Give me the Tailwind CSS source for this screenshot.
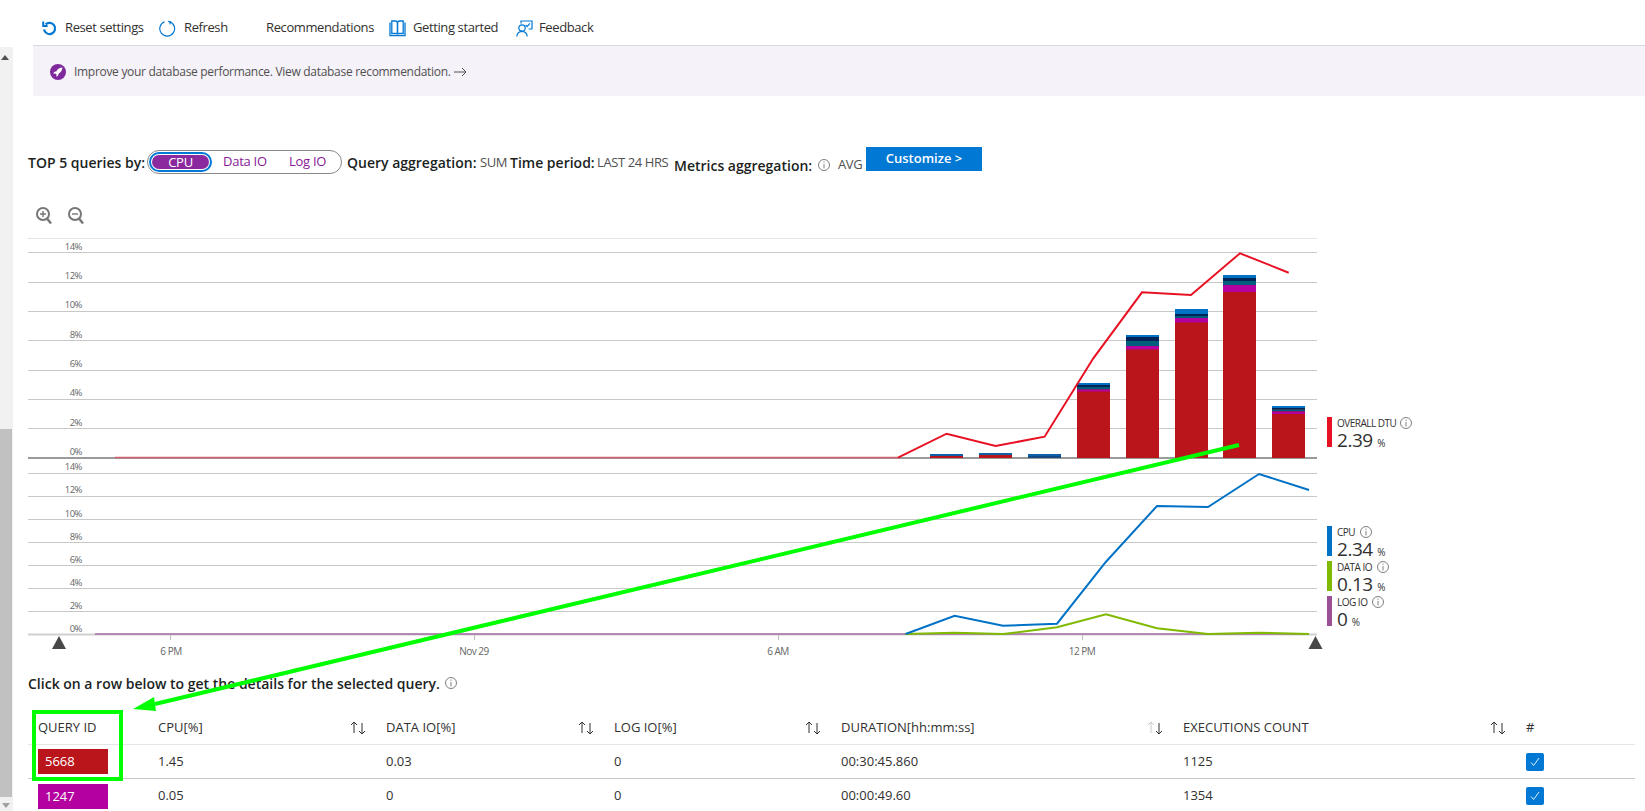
<!DOCTYPE html>
<html lang="en">
<head>
  <meta charset="UTF-8" />
  <title>Query Performance Insight</title>
  <script src="https://cdn.jsdelivr.net/npm/@tailwindcss/browser@4"></script>
</head>
<body class="relative w-[1645px] h-[811px] overflow-hidden bg-white flex font-['Open_Sans',sans-serif] text-[#323130]">

  <!-- Scrollbar -->
  <div class="w-[13px] shrink-0 mt-[47px] bg-[#f1f1f1] flex flex-col">
    <div class="h-[382px] relative">
      <div class="absolute left-[1px] top-[8px] w-0 h-0 border-x-[4px] border-x-transparent border-b-[5px] border-b-[#505050]"></div>
    </div>
    <div class="w-[12px] h-[368px] bg-[#c1c1c1]"></div>
    <div class="w-0 h-0 ml-[2px] mt-[6px] border-x-[4px] border-x-transparent border-t-[5px] border-t-[#a0a0a0]"></div>
  </div>

  <main class="flex-1 flex flex-col min-w-0">
    <!-- Toolbar -->
    <div class="ml-[20px] h-[46px] shrink-0 border-b border-[#d9d9d9] flex items-center pt-[11px] text-[13px] tracking-[-0.03em] whitespace-nowrap text-[#323130]">
      <svg class="ml-[9px] w-[15px] h-[15px]" viewBox="0 0 15 15" fill="none" stroke="#0078d4" stroke-width="2.2">
        <path d="M3.6 3.4 A5.6 5.6 0 1 1 2 8.6" />
        <path d="M1.2 0.6 V5 H5.6" stroke-width="2" />
      </svg>
      <span class="ml-[8px] w-[78px]">Reset settings</span>
      <svg class="ml-[16px] w-[17px] h-[17px]" viewBox="0 0 17 17" fill="none" stroke="#0078d4" stroke-width="1.2">
        <path d="M10.5 1.6 A7.4 7.4 0 1 1 5.6 1.7" />
        <path d="M9 1.2 L11.4 2 L10.8 4.4" />
      </svg>
      <span class="ml-[8px] w-[82px]">Refresh</span>
      <span class="w-[107px]">Recommendations</span>
      <svg class="ml-[16px] w-[17px] h-[17px]" viewBox="0 0 17 17" fill="none" stroke="#0078d4" stroke-width="1.3">
        <path d="M1 2.5 V15.5 H16 V2.5" />
        <path d="M2.8 1 H6.5 Q8.5 1 8.5 3 V14.2 Q8.5 13.4 6.5 13.4 H2.8 Z" />
        <path d="M14.2 1 H10.5 Q8.5 1 8.5 3 V14.2 Q8.5 13.4 10.5 13.4 H14.2 Z" />
      </svg>
      <span class="ml-[7px] w-[86px]">Getting started</span>
      <svg class="ml-[17px] w-[17px] h-[17px]" viewBox="0 0 17 17" fill="none" stroke="#0078d4" stroke-width="1.2">
        <circle cx="6" cy="8" r="3.2" />
        <path d="M0.8 16.5 Q1.2 11.6 6 11.4 Q10.8 11.6 11.2 16.5" />
        <path d="M5 3.4 V1 H16 V9 H12.6" />
        <path d="M9.6 5 L11.2 6.6 L13.8 3.4" />
      </svg>
      <span class="ml-[6px]">Feedback</span>
    </div>

    <!-- Banner -->
    <div class="ml-[20px] h-[50px] shrink-0 pt-[1px] bg-[#f6f2f9] flex items-center text-[12px] tracking-[-0.025em] text-[#505050]">
      <svg class="ml-[17px] w-[16px] h-[16px]" viewBox="0 0 16 16">
        <circle cx="8" cy="8" r="8" fill="#7f2a9c" />
        <path d="M12.4 3.6 C9.8 3.6 7.6 5 6.2 7.4 L4.4 7.8 L3.2 9.8 L5.4 9.4 L6.6 10.6 L6.2 12.8 L8.2 11.6 L8.6 9.8 C11 8.4 12.4 6.2 12.4 3.6 Z" fill="#fff" />
      </svg>
      <span class="ml-[8px] w-[372px] whitespace-nowrap">Improve your database performance. View database recommendation.</span>
      <svg class="ml-[8px] w-[13px] h-[10px]" viewBox="0 0 13 10" fill="none" stroke="#505050" stroke-width="1">
        <path d="M0 5 H12 M8 1 L12 5 L8 9" />
      </svg>
    </div>

    <!-- Query filters -->
    <div class="ml-[15px] mt-[52px] h-[28px] shrink-0 flex items-center text-[14px] whitespace-nowrap">
      <span class="w-[119px] font-semibold text-[#201f1e]">TOP 5 queries by:</span>
      <div class="w-[195px] h-[24px] border border-[#8a8886] rounded-full flex items-center pl-[1px] text-[#881798] text-[13px] tracking-[-0.02em]">
        <div class="w-[63px] h-[20px] rounded-full border-2 border-[#0078d4] p-[1px] shrink-0">
          <div class="h-full rounded-full bg-[#8b2a9e] text-white text-center leading-[14px]">CPU</div>
        </div>
        <span class="ml-[11px] w-[66px]">Data IO</span>
        <span>Log IO</span>
      </div>
      <span class="ml-[5px] w-[133px] font-semibold text-[#201f1e]">Query aggregation:</span>
      <span class="mt-[2px] text-[13px] tracking-[-0.03em] w-[30px] text-[#505050]">SUM</span>
      <span class="w-[87px] font-semibold text-[#201f1e]">Time period:</span>
      <span class="mt-[2px] text-[13px] tracking-[-0.03em] w-[77px] text-[#505050]">LAST 24 HRS</span>
      <span class="mt-[6px] w-[144px] font-semibold text-[#201f1e]">Metrics aggregation:</span>
      <svg class="mt-[6px] w-[12px] h-[12px]" viewBox="0 0 12 12" fill="none" stroke="#605e5c" stroke-width="0.8">
        <circle cx="6" cy="6" r="5.5" />
        <path d="M6 5 V9.4 M6 2.6 V3.8" />
      </svg>
      <span class="mt-[6px] ml-[8px] w-[28px] text-[13px] tracking-[-0.03em] text-[#505050]">AVG</span>
      <button class="-mt-[7px] w-[116px] h-[24px] bg-[#0078d4] text-white text-[13px] font-semibold">Customize &gt;</button>
    </div>

    <!-- Zoom buttons -->
    <div class="ml-[23px] mt-[29px] h-[22px] shrink-0 flex items-center gap-[16px]">
      <svg class="w-[16px] h-[18px]" viewBox="0 0 16 18" fill="none" stroke="#767676" stroke-width="2">
        <circle cx="7" cy="7" r="6" />
        <path d="M11 11.5 L15 16.5" stroke-width="2.4" />
        <path d="M4 7 H10 M7 4 V10" stroke-width="1.4" />
      </svg>
      <svg class="w-[16px] h-[18px]" viewBox="0 0 16 18" fill="none" stroke="#767676" stroke-width="2">
        <circle cx="7" cy="7" r="6" />
        <path d="M11 11.5 L15 16.5" stroke-width="2.4" />
        <path d="M4 7 H10" stroke-width="1.4" />
      </svg>
    </div>

    <!-- Charts and their legends -->
    <div class="ml-[15px] mt-[3px] h-[430px] shrink-0 flex tracking-[-0.03em]">
      <svg class="shrink-0" width="1296" height="430" viewBox="28 230 1296 430">
        <!-- upper chart grid -->
        <g stroke="#c8c8c8" stroke-width="1">
          <path stroke="#e4e4e4" d="M28 238.5 H1317" />
          <path d="M28 252.5 H1317 M28 282.5 H1317 M28 311.5 H1317 M28 340.5 H1317 M28 370.5 H1317 M28 399.5 H1317 M28 428.5 H1317" />
        </g>
        <g fill="#666" font-size="9.5" text-anchor="end">
          <text x="82" y="250">14%</text><text x="82" y="279">12%</text><text x="82" y="308">10%</text>
          <text x="82" y="338">8%</text><text x="82" y="367">6%</text><text x="82" y="396">4%</text>
          <text x="82" y="426">2%</text><text x="82" y="455">0%</text>
        </g>
        <path d="M28 458 H1317" stroke="#9a9a9a" stroke-width="2" />
        <path d="M115 457.5 H898" stroke="#d4606e" stroke-width="1.5" />

        <!-- stacked bars -->
        <g>
          <rect x="930" y="454" width="33" height="4" fill="#0f5ea8" /><rect x="930" y="456" width="33" height="2" fill="#b9151b" />
          <rect x="979" y="453" width="33" height="5" fill="#0f5ea8" /><rect x="979" y="455" width="33" height="3" fill="#b9151b" />
          <rect x="1028" y="454" width="33" height="4" fill="#0f5ea8" /><rect x="1028" y="456" width="33" height="2" fill="#104a80" />

          <rect x="1077" y="383" width="33" height="75" fill="#b9151b" />
          <rect x="1077" y="383" width="33" height="2" fill="#0072c6" /><rect x="1077" y="385" width="33" height="2" fill="#012456" />
          <rect x="1077" y="387" width="33" height="2.5" fill="#005e7c" /><rect x="1077" y="389.5" width="33" height="2" fill="#b4009e" />

          <rect x="1126" y="335" width="33" height="123" fill="#b9151b" />
          <rect x="1126" y="335" width="33" height="2" fill="#0072c6" /><rect x="1126" y="337" width="33" height="4" fill="#012456" />
          <rect x="1126" y="341" width="33" height="5" fill="#005e7c" /><rect x="1126" y="346" width="33" height="3.5" fill="#b4009e" />

          <rect x="1175" y="309" width="33" height="149" fill="#b9151b" />
          <rect x="1175" y="309" width="33" height="5" fill="#0072c6" /><rect x="1175" y="314" width="33" height="2" fill="#012456" />
          <rect x="1175" y="316" width="33" height="2" fill="#005e7c" /><rect x="1175" y="318" width="33" height="4.5" fill="#b4009e" />

          <rect x="1223" y="275" width="33" height="183" fill="#b9151b" />
          <rect x="1223" y="275" width="33" height="3" fill="#0072c6" /><rect x="1223" y="278" width="33" height="3" fill="#012456" />
          <rect x="1223" y="281" width="33" height="4" fill="#005e7c" /><rect x="1223" y="285" width="33" height="7" fill="#b4009e" />

          <rect x="1272" y="406" width="33" height="52" fill="#b9151b" />
          <rect x="1272" y="406" width="33" height="2" fill="#0072c6" /><rect x="1272" y="408" width="33" height="1.5" fill="#012456" />
          <rect x="1272" y="409.5" width="33" height="2" fill="#005e7c" /><rect x="1272" y="411.5" width="33" height="2.5" fill="#b4009e" />
        </g>
        <polyline fill="none" stroke="#e81123" stroke-width="2" points="898,457.7 946.6,433.7 995.6,446 1044.6,436.7 1093.3,358.3 1142,292.3 1191,295 1240,253.3 1288.7,272.7" />

        <!-- lower chart grid -->
        <path stroke="#c8c8c8" d="M28 473.5 H1317 M28 496.5 H1317 M28 519.5 H1317 M28 542.5 H1317 M28 565.5 H1317 M28 588.5 H1317 M28 611.5 H1317" />
        <g fill="#666" font-size="9.5" text-anchor="end">
          <text x="82" y="470">14%</text><text x="82" y="493">12%</text><text x="82" y="517">10%</text>
          <text x="82" y="540">8%</text><text x="82" y="563">6%</text><text x="82" y="586">4%</text>
          <text x="82" y="609">2%</text><text x="82" y="632">0%</text>
        </g>
        <path d="M28 634.5 H1317" stroke="#d0d0d0" stroke-width="2" />
        <path d="M95 634 H1309" stroke="#a66ba6" stroke-width="1.5" />
        <polyline fill="none" stroke="#7fba00" stroke-width="2" points="905,634 954.6,632.7 1003,634 1057,627.3 1106,614.3 1157,628.3 1208,634 1259,632.7 1309,634" />
        <polyline fill="none" stroke="#0072c6" stroke-width="2" points="905.6,634 954.6,615.7 1003,625.7 1057,623.7 1106,561.7 1157,506 1208,507 1259,474 1309,490" />

        <!-- time axis -->
        <path stroke="#bdbdbd" d="M170.5 635 V640 M474.5 635 V640 M778.5 635 V640 M1082.5 635 V640" />
        <g fill="#666" font-size="10" text-anchor="middle">
          <text x="171" y="655">6 PM</text><text x="474" y="655">Nov 29</text>
          <text x="778" y="655">6 AM</text><text x="1082" y="655">12 PM</text>
        </g>
        <polygon points="59,636 66,649 52,649" fill="#484848" />
        <polygon points="1315.5,636 1322.5,649 1308.5,649" fill="#484848" />
      </svg>

      <div class="ml-[3px] flex flex-col">
        <div class="mt-[187px] h-[30px] flex border-l-[5px] border-[#e81123] pl-[5px]">
          <div class="leading-none">
            <div class="flex items-center text-[10px] h-[12px] tracking-[-0.05em]">OVERALL DTU
              <svg class="ml-[4px] w-[12px] h-[12px]" viewBox="0 0 12 12" fill="none" stroke="#605e5c" stroke-width="0.8"><circle cx="6" cy="6" r="5.5" /><path d="M6 5 V9.4 M6 2.6 V3.8" /></svg>
            </div>
            <div class="mt-[2px] text-[19px]">2.39 <span class="text-[10px]">%</span></div>
          </div>
        </div>
        <div class="mt-[79px] h-[30px] flex border-l-[5px] border-[#0072c6] pl-[5px]">
          <div class="leading-none">
            <div class="flex items-center text-[10px] h-[12px] tracking-[-0.05em]">CPU
              <svg class="ml-[5px] w-[12px] h-[12px]" viewBox="0 0 12 12" fill="none" stroke="#605e5c" stroke-width="0.8"><circle cx="6" cy="6" r="5.5" /><path d="M6 5 V9.4 M6 2.6 V3.8" /></svg>
            </div>
            <div class="mt-[2px] text-[19px]">2.34 <span class="text-[10px]">%</span></div>
          </div>
        </div>
        <div class="mt-[5px] h-[30px] flex border-l-[5px] border-[#7fba00] pl-[5px]">
          <div class="leading-none">
            <div class="flex items-center text-[10px] h-[12px] tracking-[-0.05em]">DATA IO
              <svg class="ml-[5px] w-[12px] h-[12px]" viewBox="0 0 12 12" fill="none" stroke="#605e5c" stroke-width="0.8"><circle cx="6" cy="6" r="5.5" /><path d="M6 5 V9.4 M6 2.6 V3.8" /></svg>
            </div>
            <div class="mt-[2px] text-[19px]">0.13 <span class="text-[10px]">%</span></div>
          </div>
        </div>
        <div class="mt-[5px] h-[30px] flex border-l-[5px] border-[#9b4f96] pl-[5px]">
          <div class="leading-none">
            <div class="flex items-center text-[10px] h-[12px] tracking-[-0.05em]">LOG IO
              <svg class="ml-[5px] w-[12px] h-[12px]" viewBox="0 0 12 12" fill="none" stroke="#605e5c" stroke-width="0.8"><circle cx="6" cy="6" r="5.5" /><path d="M6 5 V9.4 M6 2.6 V3.8" /></svg>
            </div>
            <div class="mt-[2px] text-[19px]">0 <span class="text-[10px]">%</span></div>
          </div>
        </div>
      </div>
    </div>

    <!-- Hint -->
    <div class="ml-[15px] mt-[13px] h-[20px] shrink-0 flex items-center text-[14px] font-semibold text-[#201f1e] whitespace-nowrap">
      Click on a row below to get the details for the selected query.
      <svg class="ml-[5px] w-[12px] h-[12px]" viewBox="0 0 12 12" fill="none" stroke="#605e5c" stroke-width="0.8"><circle cx="6" cy="6" r="5.5" /><path d="M6 5 V9.4 M6 2.6 V3.8" /></svg>
    </div>

    <!-- Table -->
    <div class="ml-[15px] mr-[10px] mt-[19px] text-[13px] text-[#323130]">
      <div class="h-[33px] pl-[10px] grid grid-cols-[120px_228px_228px_227px_342px_343px_auto] items-center border-b border-[#e6e6e6]">
        <span>QUERY ID</span>
        <div class="flex justify-between items-center pr-[19px]"><span>CPU[%]</span>
          <svg class="w-[17px] h-[14px]" viewBox="0 0 17 14" fill="none" stroke="#323130"><path d="M4 12 V1 M1 4 L4 1 L7 4" /><path d="M12 2 V13 M9 10 L12 13 L15 10" /></svg>
        </div>
        <div class="flex justify-between items-center pr-[19px]"><span>DATA IO[%]</span>
          <svg class="w-[17px] h-[14px]" viewBox="0 0 17 14" fill="none" stroke="#323130"><path d="M4 12 V1 M1 4 L4 1 L7 4" /><path d="M12 2 V13 M9 10 L12 13 L15 10" /></svg>
        </div>
        <div class="flex justify-between items-center pr-[19px]"><span>LOG IO[%]</span>
          <svg class="w-[17px] h-[14px]" viewBox="0 0 17 14" fill="none" stroke="#323130"><path d="M4 12 V1 M1 4 L4 1 L7 4" /><path d="M12 2 V13 M9 10 L12 13 L15 10" /></svg>
        </div>
        <div class="flex justify-between items-center pr-[19px]"><span>DURATION[hh:mm:ss]</span>
          <svg class="w-[17px] h-[14px]" viewBox="0 0 17 14" fill="none" stroke="#323130"><path stroke="#c8c8c8" d="M4 12 V1 M1 4 L4 1 L7 4" /><path d="M12 2 V13 M9 10 L12 13 L15 10" /></svg>
        </div>
        <div class="flex justify-between items-center pr-[19px]"><span>EXECUTIONS COUNT</span>
          <svg class="w-[17px] h-[14px]" viewBox="0 0 17 14" fill="none" stroke="#323130"><path d="M4 12 V1 M1 4 L4 1 L7 4" /><path d="M12 2 V13 M9 10 L12 13 L15 10" /></svg>
        </div>
        <span>#</span>
      </div>
      <div class="h-[34px] pl-[10px] grid grid-cols-[120px_228px_228px_227px_342px_343px_auto] items-center border-b border-[#c8c8c8]">
        <div class="w-[70px] h-[25px] bg-[#b9151b] text-white text-[13px] leading-[25px] pl-[7px]">5668</div>
        <span>1.45</span><span>0.03</span><span>0</span><span>00:30:45.860</span><span>1125</span>
        <div class="w-[18px] h-[18px] rounded-[2px] bg-[#0078d4] flex items-center justify-center">
          <svg class="w-[10px] h-[10px]" viewBox="0 0 10 10" fill="none" stroke="#fff" stroke-width="0.9"><path d="M1 5.5 L3.6 8.5 L9 1" /></svg>
        </div>
      </div>
      <div class="h-[34px] pl-[10px] grid grid-cols-[120px_228px_228px_227px_342px_343px_auto] items-center">
        <div class="w-[70px] h-[25px] bg-[#b4009e] text-white text-[13px] leading-[25px] pl-[7px]">1247</div>
        <span>0.05</span><span>0</span><span>0</span><span>00:00:49.60</span><span>1354</span>
        <div class="w-[18px] h-[18px] rounded-[2px] bg-[#0078d4] flex items-center justify-center">
          <svg class="w-[10px] h-[10px]" viewBox="0 0 10 10" fill="none" stroke="#fff" stroke-width="0.9"><path d="M1 5.5 L3.6 8.5 L9 1" /></svg>
        </div>
      </div>
    </div>
  </main>

  <!-- Green annotation drawn on top of the screenshot -->
  <svg class="absolute inset-0 pointer-events-none" width="1645" height="811" viewBox="0 0 1645 811" fill="none">
    <rect x="34" y="712" width="87" height="67" stroke="#00ff00" stroke-width="4" />
    <path d="M1239 445 L155 704" stroke="#00ff00" stroke-width="4" />
    <polygon points="133,709 154,697 156,711" fill="#00ff00" />
  </svg>
</body>
</html>
